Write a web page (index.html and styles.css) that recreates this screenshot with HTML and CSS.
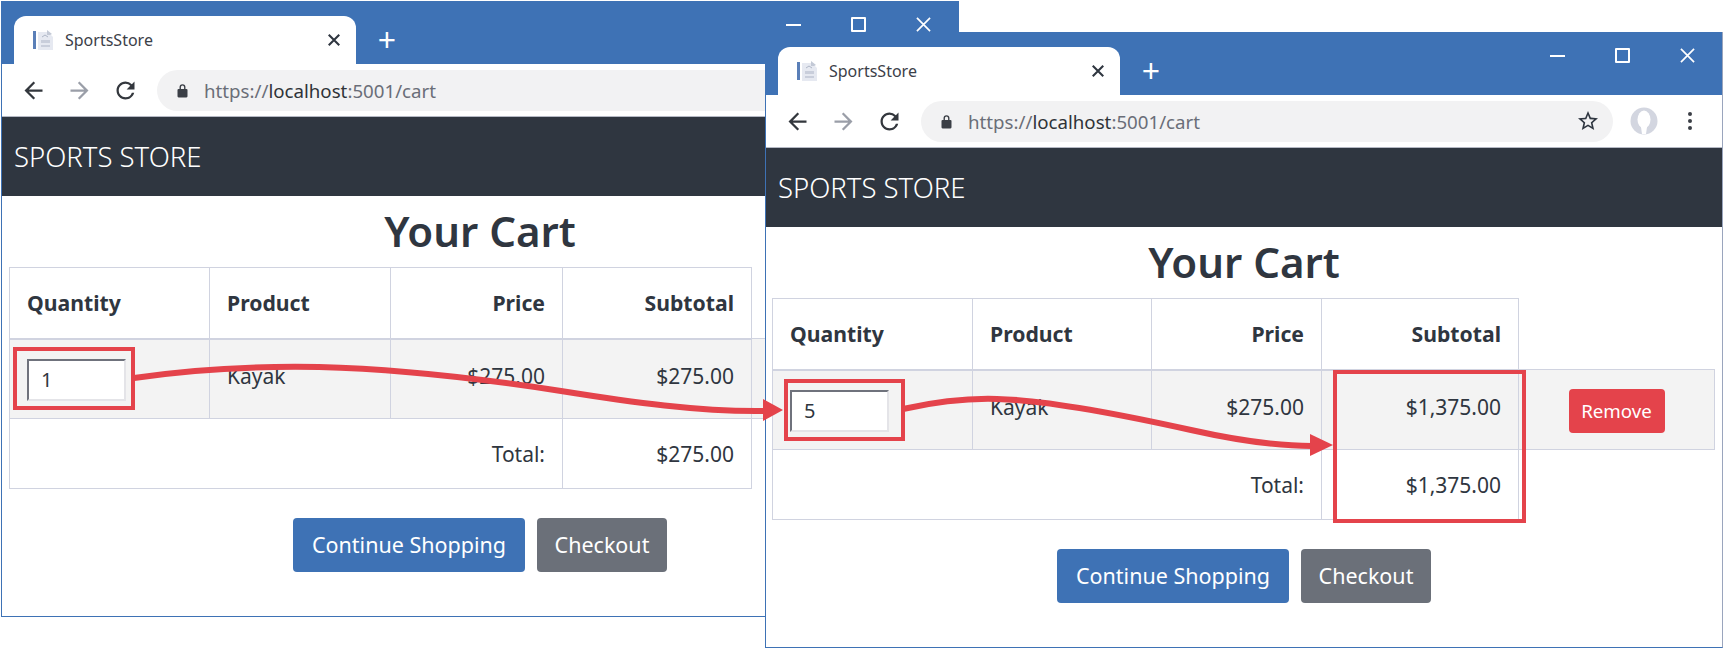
FILE: index.html
```html
<!DOCTYPE html>
<html lang="en">
<head>
    <meta charset="UTF-8">
    <meta name="viewport" content="width=device-width, initial-scale=1.0">
    <title>SportsStore cart</title>
    <link rel="stylesheet" href="styles.css">
</head>
<body>
    <svg class="defs" width="0" height="0">
        <symbol id="i-arrow" viewBox="0 0 24 24"><path d="M20 11H7.83l5.59-5.59L12 4l-8 8 8 8 1.41-1.41L7.83 13H20v-2z"/></symbol>
        <symbol id="i-reload" viewBox="0 0 24 24"><path d="M17.65 6.35A7.958 7.958 0 0 0 12 4c-4.42 0-7.99 3.58-7.99 8s3.57 8 7.99 8c3.73 0 6.84-2.55 7.73-6h-2.08A5.99 5.99 0 0 1 12 18c-3.31 0-6-2.69-6-6s2.69-6 6-6c1.66 0 3.14.69 4.22 1.78L13 11h7V4l-2.35 2.35z"/></symbol>
        <symbol id="i-lock" viewBox="0 0 16 16"><path d="M5.2 7V4.9a2.8 2.8 0 0 1 5.6 0V7h-1.3V4.9a1.5 1.5 0 0 0-3 0V7z"/><rect x="3.3" y="6.6" width="9.4" height="7.9" rx="1"/></symbol>
        <symbol id="i-star" viewBox="0 0 24 24"><path d="M22 9.24l-7.19-.62L12 2 9.19 8.63 2 9.24l5.46 4.73L5.82 21 12 17.27 18.18 21l-1.63-7.03L22 9.24zM12 15.4l-3.76 2.27 1-4.28-3.32-2.88 4.38-.38L12 6.1l1.71 4.04 4.38.38-3.32 2.88 1 4.28L12 15.4z"/></symbol>
        <symbol id="i-fav" viewBox="0 0 24 24">
            <rect x="1" y="3" width="3" height="18" fill="#5a7fb8"/>
            <path d="M6 4h10l5 5v13H6z" fill="#e6e9f1"/>
            <path d="M15 2l5 4-2 1h-3z" fill="#c3c9d6"/>
            <path d="M9 12h9v3H9zM9 17h9v2H9z" fill="#c9cedb"/>
            <path d="M10 9l3-2 3 2" stroke="#aeb6c6" stroke-width="1" fill="none"/>
        </symbol>
    </svg>

    <div class="window window-back">
        <div class="titlebar">
            <div class="tab">
                <svg class="favicon"><use href="#i-fav"/></svg>
                <span class="tab-title">SportsStore</span>
                <svg class="tab-close" viewBox="0 0 12 12"><path d="M1.5 1.5l9 9M10.5 1.5l-9 9"/></svg>
            </div>
            <span class="new-tab">+</span>
            <div class="controls">
                <span class="ctl-min"></span>
                <span class="ctl-max"></span>
                <span class="ctl-close">
                    <svg viewBox="0 0 16 16"><path d="M1 1l14 14M15 1L1 15"/></svg>
                </span>
            </div>
        </div>
        <div class="toolbar">
            <svg class="tool"><use href="#i-arrow"/></svg>
            <svg class="tool tool-off flip"><use href="#i-arrow"/></svg>
            <svg class="tool"><use href="#i-reload"/></svg>
            <div class="omnibox">
                <svg class="lock"><use href="#i-lock"/></svg>
                <span class="url">https://<b>localhost</b>:5001/cart</span>
            </div>
        </div>
        <div class="navbar">SPORTS STORE</div>
        <h2 class="heading">Your Cart</h2>
        <table class="cart cart-back">
            <colgroup><col class="c1"><col class="c2"><col class="c3"><col class="c4"><col class="c5"></colgroup>
            <tr class="head-row">
                <th>Quantity</th><th>Product</th><th class="num">Price</th><th class="num">Subtotal</th><th class="bare"></th>
            </tr>
            <tr class="item-row">
                <td><input class="qty" type="text" value="1"></td><td>Kayak</td><td class="num">$275.00</td><td class="num">$275.00</td><td></td>
            </tr>
            <tr class="total-row">
                <td colspan="3" class="num">Total:</td><td class="num">$275.00</td><td class="bare"></td>
            </tr>
        </table>
        <div class="actions">
            <a class="btn btn-primary">Continue Shopping</a>
            <a class="btn btn-secondary">Checkout</a>
        </div>
    </div>

    <div class="window window-front">
        <div class="titlebar">
            <div class="tab">
                <svg class="favicon"><use href="#i-fav"/></svg>
                <span class="tab-title">SportsStore</span>
                <svg class="tab-close" viewBox="0 0 12 12"><path d="M1.5 1.5l9 9M10.5 1.5l-9 9"/></svg>
            </div>
            <span class="new-tab">+</span>
            <div class="controls">
                <span class="ctl-min"></span>
                <span class="ctl-max"></span>
                <span class="ctl-close">
                    <svg viewBox="0 0 16 16"><path d="M1 1l14 14M15 1L1 15"/></svg>
                </span>
            </div>
        </div>
        <div class="toolbar">
            <svg class="tool"><use href="#i-arrow"/></svg>
            <svg class="tool tool-off flip"><use href="#i-arrow"/></svg>
            <svg class="tool"><use href="#i-reload"/></svg>
            <div class="omnibox">
                <svg class="lock"><use href="#i-lock"/></svg>
                <span class="url">https://<b>localhost</b>:5001/cart</span>
                <svg class="star"><use href="#i-star"/></svg>
            </div>
            <svg class="avatar" viewBox="0 0 28 28">
                <circle cx="14" cy="14" r="13.5" fill="#d3d6e0"/>
                <ellipse cx="14" cy="12.5" rx="6.5" ry="9" fill="#fff"/>
                <path d="M11 20h6l-1 7h-4z" fill="#fff"/>
            </svg>
            <div class="menu-dots"><i></i><i></i><i></i></div>
        </div>
        <div class="navbar">SPORTS STORE</div>
        <h2 class="heading">Your Cart</h2>
        <table class="cart cart-front">
            <colgroup><col class="c1"><col class="c2"><col class="c3"><col class="c4"><col class="c5"></colgroup>
            <tr class="head-row">
                <th>Quantity</th><th>Product</th><th class="num">Price</th><th class="num">Subtotal</th><th class="bare"></th>
            </tr>
            <tr class="item-row">
                <td><input class="qty" type="text" value="5"></td><td>Kayak</td><td class="num">$275.00</td><td class="num">$1,375.00</td><td class="remove-cell"><a class="btn-remove">Remove</a></td>
            </tr>
            <tr class="total-row">
                <td colspan="3" class="num">Total:</td><td class="num">$1,375.00</td><td class="bare"></td>
            </tr>
        </table>
        <div class="actions">
            <a class="btn btn-primary">Continue Shopping</a>
            <a class="btn btn-secondary">Checkout</a>
        </div>
    </div>

    <!-- red callouts drawn over both windows -->
    <svg class="callouts" width="1725" height="651" viewBox="0 0 1725 651">
        <g fill="none" stroke="#e4434b" stroke-width="4">
            <rect x="15" y="349" width="118" height="59"/>
            <rect x="786" y="381" width="117" height="58"/>
            <rect x="1335" y="372" width="189" height="149"/>
        </g>
        <g fill="none" stroke="#e4434b" stroke-width="6">
            <path d="M134 378C200 368 260 366 319 367C400 369 490 380 561 391C630 402 700 412 765 411"/>
            <path d="M903 409C935 402 965 398 997 399C1045 400 1110 412 1191 430C1240 441 1280 446 1312 446"/>
        </g>
        <path d="M763 399L783 410L763 421z" fill="#e4434b"/>
        <path d="M1310 434L1333 445L1310 456z" fill="#e4434b"/>
    </svg>
</body>
</html>
```

FILE: styles.css
```css
body {
    margin: 0;
    background-color: #ffffff;
    font-family: "Noto Sans", "Open Sans", sans-serif;
    color: #2f3640;
}

.defs {
    position: absolute;
}

.window {
    position: absolute;
    box-sizing: border-box;
    width: 958px;
    height: 616px;
    background-color: #ffffff;
    border: 1px solid #3e72b5;
    border-top: none;
    overflow: hidden;
}

.window-back {
    left: 1px;
    top: 1px;
}

.window-front {
    left: 765px;
    top: 32px;
    border-right-color: #9aa5bd;
}

/* title bar */
.titlebar {
    display: flex;
    align-items: flex-end;
    height: 63px;
    padding-left: 12px;
    background-color: #3e72b5;
}

.tab {
    display: flex;
    align-items: center;
    box-sizing: border-box;
    width: 342px;
    height: 48px;
    padding: 0 18px;
    background-color: #ffffff;
    border-radius: 12px 12px 0 0;
}

.favicon {
    width: 24px;
    height: 24px;
    margin-right: 9px;
}

.tab-title {
    flex: 1;
    font-size: 16px;
    color: #3b4048;
}

.tab-close {
    width: 14px;
    height: 14px;
    margin-right: -3px;
}

.tab-close path {
    stroke: #2f3640;
    stroke-width: 1.8;
    fill: none;
}

.new-tab {
    align-self: flex-end;
    width: 48px;
    margin-left: 7px;
    text-align: center;
    font-size: 32px;
    line-height: 48px;
    color: #ffffff;
}

.controls {
    display: flex;
    align-self: flex-start;
    align-items: center;
    gap: 50px;
    height: 15px;
    margin-left: auto;
    margin-top: 16px;
    margin-right: 27px;
}

.ctl-min {
    width: 15px;
    height: 2px;
    background-color: #ffffff;
}

.ctl-max {
    box-sizing: border-box;
    width: 15px;
    height: 15px;
    border: 2px solid #ffffff;
    border-radius: 1px;
}

.ctl-close,
.ctl-close svg {
    display: block;
    width: 15px;
    height: 15px;
}

.ctl-close path {
    stroke: #ffffff;
    stroke-width: 1.8;
}

/* toolbar */
.toolbar {
    display: flex;
    align-items: center;
    box-sizing: border-box;
    height: 52px;
    padding-left: 18px;
    background-color: #ffffff;
}

.tool {
    width: 27px;
    height: 27px;
    margin-right: 19px;
    fill: #33373d;
}

.tool-off {
    fill: #9a9ea8;
}

.flip {
    transform: scaleX(-1);
}

.omnibox {
    display: flex;
    align-items: center;
    box-sizing: border-box;
    width: 692px;
    height: 41px;
    margin-left: -1px;
    padding: 0 12px 0 17px;
    background-color: #f2f2f3;
    border-radius: 21px;
}

.lock {
    width: 17px;
    height: 17px;
    margin-right: 13px;
    fill: #3b3f46;
}

.url {
    flex: 1;
    font-size: 18.7px;
    color: #6a6e78;
}

.url b {
    font-weight: normal;
    color: #2f3338;
}

.star {
    width: 24px;
    height: 24px;
    margin-right: 1px;
    fill: #2f3640;
}

.avatar {
    width: 28px;
    height: 28px;
    margin-left: 17px;
}

.menu-dots {
    display: flex;
    flex-direction: column;
    gap: 3px;
    margin-left: 30px;
}

.menu-dots i {
    width: 4px;
    height: 4px;
    border-radius: 50%;
    background-color: #3b3f46;
}

/* store page */
.navbar {
    box-sizing: border-box;
    height: 80px;
    padding: 0 12px;
    line-height: 80px;
    font-size: 27.5px;
    font-weight: 300;
    color: #ffffff;
    background-color: #2f3640;
    border-top: 1px solid #b5b9c4;
}

.heading {
    height: 71px;
    margin: 0;
    text-align: center;
    line-height: 69px;
    font-size: 42px;
    font-weight: 600;
}

.cart {
    border-collapse: collapse;
    table-layout: fixed;
    font-size: 21px;
}

.cart-back {
    margin-left: 7px;
}

.cart-front {
    margin-left: 6px;
}

.cart th,
.cart td {
    box-sizing: border-box;
    padding: 0 17px;
    border: 1px solid #d0d3e0;
    text-align: left;
    font-weight: normal;
}

.cart th {
    font-size: 21.2px;
    font-weight: 700;
    border-bottom-width: 2px;
}

.cart .num {
    text-align: right;
}

.cart .bare {
    border: none;
}

.head-row {
    height: 71px;
}

.item-row {
    height: 80px;
    background-color: #f3f3f3;
}

.cart .item-row td {
    padding-top: 19px;
    vertical-align: top;
    line-height: 34px;
}

.total-row {
    height: 70px;
}

.cart-back .c1 { width: 200px; }
.cart-back .c2 { width: 181px; }
.cart-back .c3 { width: 172px; }
.cart-back .c4 { width: 189px; }
.cart-back .c5 { width: 198px; }

.cart-front .c1 { width: 200px; }
.cart-front .c2 { width: 179px; }
.cart-front .c3 { width: 170px; }
.cart-front .c4 { width: 197px; }
.cart-front .c5 { width: 196px; }

.qty {
    display: block;
    box-sizing: border-box;
    width: 99px;
    height: 42px;
    padding: 0 0 0 12px;
    border: 2px solid #6f727c;
    border-right-color: #e4e4e8;
    border-bottom-color: #e4e4e8;
    background-color: #ffffff;
    font-family: inherit;
    font-size: 20px;
    color: #2f3640;
}

.remove-cell {
    text-align: center !important;
}

.btn-remove {
    display: block;
    width: 96px;
    margin: 0 auto;
    line-height: 44px;
    text-align: center;
    font-size: 18.7px;
    color: #ffffff;
    background-color: #e4434b;
    border-radius: 4px;
}

.actions {
    display: flex;
    justify-content: center;
    gap: 12px;
    margin-top: 29px;
}

.btn {
    height: 54px;
    line-height: 54px;
    text-align: center;
    font-size: 21.5px;
    color: #ffffff;
    border-radius: 4px;
}

.btn-primary {
    width: 232px;
    background-color: #3e72b5;
}

.btn-secondary {
    width: 130px;
    background-color: #6b7079;
}

.callouts {
    position: absolute;
    left: 0;
    top: 0;
}
```
